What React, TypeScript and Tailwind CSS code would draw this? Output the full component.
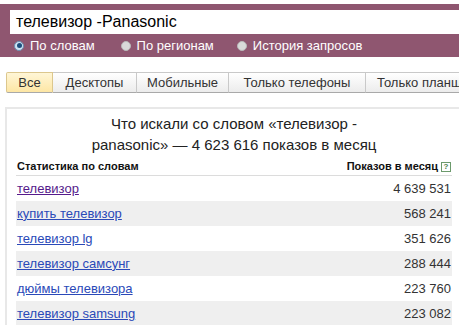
import React from 'react';

const rows = [
  { q: 'телевизор', n: '4 639 531', visited: true },
  { q: 'купить телевизор', n: '568 241' },
  { q: 'телевизор lg', n: '351 626' },
  { q: 'телевизор самсунг', n: '288 444' },
  { q: 'дюймы телевизора', n: '223 760' },
  { q: 'телевизор samsung', n: '223 082' },
];

const tabs = ['Все', 'Десктопы', 'Мобильные', 'Только телефоны', 'Только планшеты'];

const Radio: React.FC<{ checked?: boolean; label: string }> = ({ checked, label }) => (
  <label className="flex items-center gap-[6px]">
    <span
      className={`w-[10px] h-[10px] rounded-full flex items-center justify-center ${
        checked ? 'bg-[#cfe3f3] border border-[#6d8fb0]' : 'bg-[#d9d9d9] border border-[#b9b9b9]'
      }`}
    >
      {checked && <span className="w-[5px] h-[5px] rounded-full bg-[#1d4f7e]" />}
    </span>
    <span>{label}</span>
  </label>
);

export default function App() {
  return (
    <div className="w-[459px] h-[325px] overflow-hidden bg-white font-['Liberation_Sans',Arial,sans-serif] text-[#222]">
      {/* search band */}
      <div className="mt-[4px] h-[53px] bg-[#8f5670] pt-[6px] pl-[10px]">
        <div className="h-[24px] bg-white w-[460px] flex items-center pl-[6px] text-[16px] text-black">
          телевизор -Panasonic
        </div>
        <div className="flex items-center h-[23px] pl-[4px] text-[13px] text-white">
          <Radio checked label="По словам" />
          <div className="ml-[26px]">
            <Radio label="По регионам" />
          </div>
          <div className="ml-[23px]">
            <Radio label="История запросов" />
          </div>
        </div>
      </div>

      {/* tabs */}
      <div className="mt-[15px] ml-[6px] flex h-[21px] whitespace-nowrap text-[13px] text-[#333]">
        {tabs.map((t, i) => (
          <div
            key={t}
            className={`shrink-0 h-full flex items-center border border-b-[#a9a9a9] ${
              i === 0
                ? 'w-[47px] justify-center bg-gradient-to-b from-[#fff6d6] to-[#fde6a4] border-[#dcc78d] rounded-l-[2px]'
                : 'bg-gradient-to-b from-white to-[#ececec] border-[#c9c9c9] border-l-0 ' +
                  (i === 1 ? 'w-[84px] justify-center' : i === 2 ? 'w-[92px] justify-center' : i === 3 ? 'w-[137px] justify-center' : 'w-[120px] pl-[11px]')
            }`}
          >
            {t}
          </div>
        ))}
      </div>

      {/* results panel */}
      <div className="mt-[14px] ml-[5px] w-[470px] border-2 border-[#e8e8e8] pt-[4px] pl-[9px]">
        <div className="w-[436px] text-center text-[15px] leading-[21px] text-[#222]">
          Что искали со словом «телевизор -<br />
          panasonic» — 4 623 616 показов в месяц
        </div>
        <div className="w-[436px] mt-[3px]">
          <div className="flex justify-between items-center h-[18px] border-b border-[#dcdcdc] text-[11px] font-bold text-[#111]">
            <span className="pl-[1px]">Статистика по словам</span>
            <span className="flex items-center gap-[3px] pr-[1px]">
              Показов в месяц
              <span className="w-[10px] h-[10px] border border-[#6c9a6c] text-[8px] leading-[8px] text-[#4c7d4c] flex items-center justify-center font-bold">
                ?
              </span>
            </span>
          </div>
          {rows.map((r, i) => (
            <div
              key={r.q}
              className={`flex justify-between items-center h-[25px] text-[13px] ${i % 2 === 1 ? 'bg-[#efefef]' : 'bg-white'}`}
            >
              <a href="#" className={`pl-[1px] underline ${r.visited ? 'text-[#551a8b]' : 'text-[#2a49b8]'}`}>
                {r.q}
              </a>
              <span className="pr-[1px] text-[#333]">{r.n}</span>
            </div>
          ))}
        </div>
      </div>
    </div>
  );
}
